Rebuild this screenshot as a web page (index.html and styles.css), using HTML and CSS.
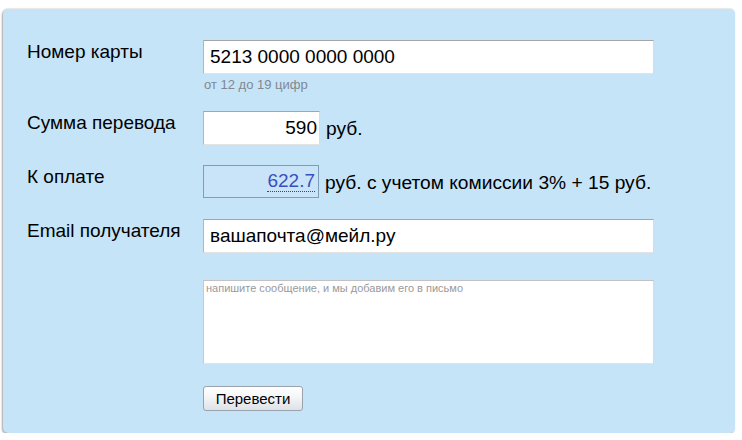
FILE: index.html
```html
<!DOCTYPE html>
<html lang="ru">
<head>
<meta charset="utf-8">
<link rel="stylesheet" href="styles.css">
</head>
<body>
<div class="panel">
  <form class="form">
    <div class="row row-card">
      <label class="label">Номер карты</label>
      <div class="field">
        <input class="input input-wide" type="text" value="5213 0000 0000 0000">
        <div class="hint">от 12 до 19 цифр</div>
      </div>
    </div>
    <div class="row row-sum">
      <label class="label">Сумма перевода</label>
      <div class="field field-inline">
        <input class="input input-short" type="text" value="590">
        <span class="unit">руб.</span>
      </div>
    </div>
    <div class="row row-pay">
      <label class="label">К оплате</label>
      <div class="field field-inline">
        <div class="total"><span class="total-value">622.7</span></div>
        <span class="unit">руб. с учетом комиссии 3% + 15 руб.</span>
      </div>
    </div>
    <div class="row row-email">
      <label class="label">Email получателя</label>
      <div class="field">
        <input class="input input-wide" type="text" value="вашапочта@мейл.ру">
      </div>
    </div>
    <div class="row row-msg">
      <span class="label"></span>
      <div class="field">
        <textarea class="message" placeholder="напишите сообщение, и мы добавим его в письмо"></textarea>
      </div>
    </div>
    <div class="row row-btn">
      <span class="label"></span>
      <div class="field">
        <button class="button" type="button">Перевести</button>
      </div>
    </div>
  </form>
</div>
</body>
</html>
```
FILE: styles.css
```css
* { box-sizing: border-box; }
html, body { margin: 0; padding: 0; background: #ffffff; }
body {
  font-family: "Liberation Sans", Arial, sans-serif;
  color: #000;
  padding: 9px 7px 0 3px;
}
.panel {
  width: 732px;
  height: 424px;
  background: #c6e4f8;
  border-radius: 5px;
  box-shadow: -1px 1px 2px rgba(0,0,0,0.35), 0 -1px 1px rgba(0,0,0,0.08);
  padding: 31px 0 0 24px;
}
.form { display: flex; flex-direction: column; }
.row { display: flex; align-items: flex-start; }
.label {
  width: 176px;
  flex: none;
  font-size: 19px;
  line-height: 21px;
  padding-top: 1px;
}
.field { flex: none; }
.field-inline { display: flex; align-items: center; }
.input {
  display: block;
  height: 34px;
  border: 1px solid;
  border-color: #a5a5a5 #dadada #e3e3e3 #b5b5b5;
  background: #fff;
  font-family: "Liberation Sans", Arial, sans-serif;
  font-size: 19px;
  color: #000;
  padding: 0 6px;
  outline: none;
  margin: 0;
}
.input-wide { width: 451px; }
.input-short { width: 117px; text-align: right; padding: 0 2px; }
.hint {
  font-size: 13px;
  line-height: 16px;
  color: #808890;
  margin-top: 3px;
  padding-left: 1px;
}
.row-card { margin-bottom: 18px; }
.row-sum { margin-bottom: 20px; }
.row-pay { margin-bottom: 21px; }
.row-email { margin-bottom: 27px; }
.row-msg { margin-bottom: 22px; }
.unit {
  font-size: 19.2px;
  margin-left: 6px;
  padding-top: 2px;
}
.total {
  width: 116px;
  height: 33px;
  border: 1px solid #7f9db9;
  background: #c9e4f8;
  text-align: right;
  padding: 4px 3px 0 0;
}
.total-value {
  font-size: 19px;
  color: #3a4fbf;
  border-bottom: 1px dotted #2a3fc0;
  line-height: 22px;
}
.message {
  display: block;
  width: 451px;
  height: 84px;
  border: 1px solid;
  border-color: #c2c2c2 #dadada #e3e3e3 #c8c8c8;
  background: #fff;
  resize: none;
  margin: 0;
  padding: 1px 2px;
  font-family: "Liberation Sans", Arial, sans-serif;
  font-size: 11px;
  outline: none;
}
.message::placeholder { color: #9a9a9a; opacity: 1; }
.button {
  display: block;
  width: 100px;
  height: 25px;
  border: 1px solid #9aa3ad;
  border-radius: 3px;
  background: linear-gradient(#ffffff 0%, #f3f5f7 45%, #dde2e7 100%);
  font-family: "Liberation Sans", Arial, sans-serif;
  font-size: 15px;
  color: #000;
  padding: 0;
  margin: 0;
}
```
